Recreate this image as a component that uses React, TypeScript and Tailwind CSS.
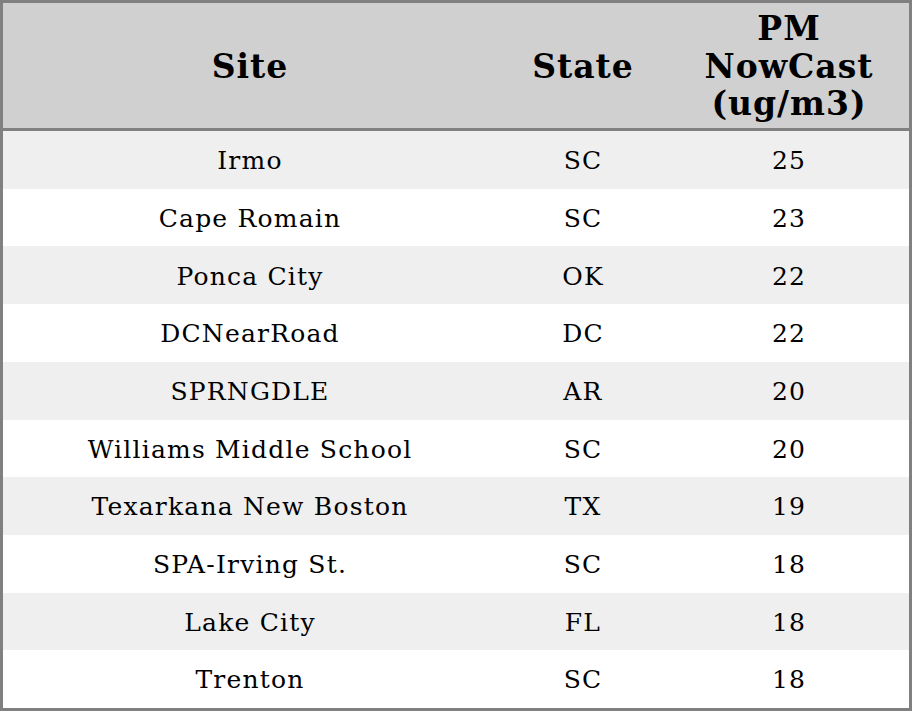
const rows = [
  { site: "Irmo", state: "SC", pm: 25 },
  { site: "Cape Romain", state: "SC", pm: 23 },
  { site: "Ponca City", state: "OK", pm: 22 },
  { site: "DCNearRoad", state: "DC", pm: 22 },
  { site: "SPRNGDLE", state: "AR", pm: 20 },
  { site: "Williams Middle School", state: "SC", pm: 20 },
  { site: "Texarkana New Boston", state: "TX", pm: 19 },
  { site: "SPA-Irving St.", state: "SC", pm: 18 },
  { site: "Lake City", state: "FL", pm: 18 },
  { site: "Trenton", state: "SC", pm: 18 },
];

export default function App() {
  return (
    <div className="flex h-[711px] w-[912px] flex-col border-[3px] border-[#808080] bg-white font-['DejaVu_Serif',serif] text-black">
      <div className="flex h-[128px] shrink-0 items-center border-b-[3px] border-[#808080] bg-[#d0d0d0] pt-[2px] text-[33px] font-bold leading-[1.14] tracking-[1px]">
        <div className="w-[494px] text-center">Site</div>
        <div className="w-[172px] text-center">State</div>
        <div className="flex-1 text-center">
          PM
          <br />
          NowCast
          <br />
          (ug/m3)
        </div>
      </div>
      <div className="flex flex-1 flex-col text-[25px] tracking-[1.2px]">
        {rows.map((r, i) => (
          <div
            key={r.site}
            className={`flex flex-1 items-center pt-[2px] ${i % 2 === 0 ? "bg-[#efefef]" : "bg-white"}`}
          >
            <div className="w-[494px] text-center">{r.site}</div>
            <div className="w-[172px] text-center">{r.state}</div>
            <div className="flex-1 text-center">{r.pm}</div>
          </div>
        ))}
      </div>
    </div>
  );
}
